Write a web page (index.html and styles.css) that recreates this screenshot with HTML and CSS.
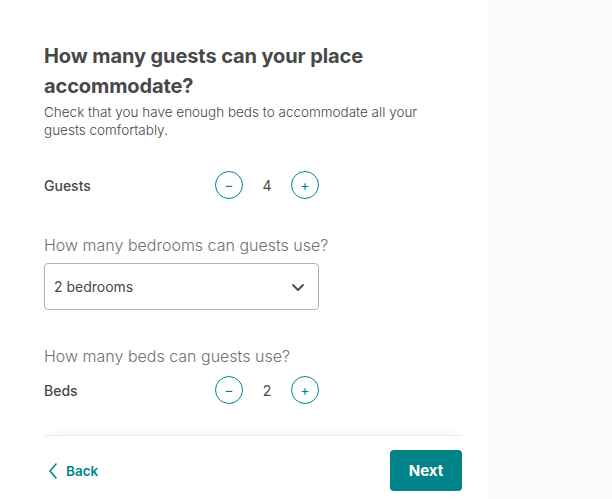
FILE: index.html
```html
<!DOCTYPE html>
<html lang="en">
<head>
    <meta charset="UTF-8">
    <meta name="viewport" content="width=device-width, initial-scale=1.0">
    <title>Guests</title>
    <link rel="stylesheet" href="styles.css">
</head>
<body>
    <div class="layout">
        <div class="main">
            <h1>How many guests can your place accommodate?</h1>
            <p class="intro">Check that you have enough beds to accommodate all your guests comfortably.</p>

            <div class="counter-row guests-row">
                <span class="counter-label">Guests</span>
                <div class="stepper">
                    <button class="step-btn" aria-label="decrease">&minus;</button>
                    <span class="step-value">4</span>
                    <button class="step-btn" aria-label="increase">+</button>
                </div>
            </div>

            <h2 class="question">How many bedrooms can guests use?</h2>
            <div class="select-box">
                <span>2 bedrooms</span>
                <svg width="16" height="16" viewBox="0 0 16 16" fill="none" stroke="#484848" stroke-width="1.8" stroke-linecap="round" stroke-linejoin="round">
                    <path d="M3 6l5 5 5-5"/>
                </svg>
            </div>

            <h2 class="question">How many beds can guests use?</h2>
            <div class="counter-row beds-row">
                <span class="counter-label">Beds</span>
                <div class="stepper">
                    <button class="step-btn" aria-label="decrease">&minus;</button>
                    <span class="step-value">2</span>
                    <button class="step-btn" aria-label="increase">+</button>
                </div>
            </div>

            <div class="footer">
                <a class="back" href="#">
                    <svg width="10" height="16" viewBox="0 0 10 16" fill="none" stroke="#008489" stroke-width="1.6" stroke-linecap="round" stroke-linejoin="round">
                        <path d="M8 1L2 8l6 7"/>
                    </svg>
                    Back
                </a>
                <button class="next">Next</button>
            </div>
        </div>
        <div class="side"></div>
    </div>
</body>
</html>
```

FILE: styles.css
```css
body {
    margin: 0;
    font-family: Inter, "Noto Sans", sans-serif;
    color: #484848;
    background: #fff;
}
.layout {
    display: flex;
    min-height: 499px;
}
.main {
    width: 418px;
    padding: 41px 26px 0 44px;
}
.side {
    flex: 1;
    background-color: #fafafa;
}
h1 {
    margin: 0;
    font-size: 20px;
    line-height: 30px;
    font-weight: 700;
    letter-spacing: -0.1px;
}
.intro {
    margin: 2px 0 0;
    font-size: 13.5px;
    line-height: 18px;
    font-weight: 300;
    width: 390px;
}
.counter-row {
    display: flex;
    align-items: center;
    width: 275px;
    justify-content: space-between;
}
.guests-row {
    margin-top: 32px;
}
.beds-row {
    margin-top: 9px;
}
.counter-label {
    font-size: 14px;
    font-weight: 500;
}
.stepper {
    display: flex;
    align-items: center;
}
.step-btn {
    width: 28px;
    height: 28px;
    border-radius: 50%;
    border: 1px solid #008489;
    background: #fff;
    color: #008489;
    font-size: 14px;
    padding: 0;
    line-height: 1;
    font-family: inherit;
}
.step-value {
    width: 48px;
    text-align: center;
    font-size: 14px;
}
.question {
    margin: 35px 0 0;
    font-size: 16px;
    line-height: 22px;
    font-weight: 300;
    color: #717171;
}
.select-box {
    margin-top: 7px;
    width: 252px;
    height: 45px;
    border: 1px solid #b0b0b0;
    border-radius: 4px;
    display: flex;
    align-items: center;
    justify-content: space-between;
    padding: 0 12px 0 9px;
    font-size: 14px;
}
.footer {
    margin-top: 31px;
    border-top: 1px solid #ebebeb;
    box-shadow: 0 -8px 12px -8px rgba(0, 0, 0, 0.07);
    display: flex;
    align-items: center;
    justify-content: space-between;
    padding-top: 14px;
}
.back {
    display: flex;
    align-items: center;
    gap: 8px;
    color: #008489;
    text-decoration: none;
    font-size: 13.5px;
    font-weight: 600;
    padding-left: 4px;
}
.next {
    width: 72px;
    height: 41px;
    background-color: #008489;
    color: #fff;
    border: none;
    border-radius: 4px;
    font-family: inherit;
    font-size: 15px;
    font-weight: 700;
}
```
